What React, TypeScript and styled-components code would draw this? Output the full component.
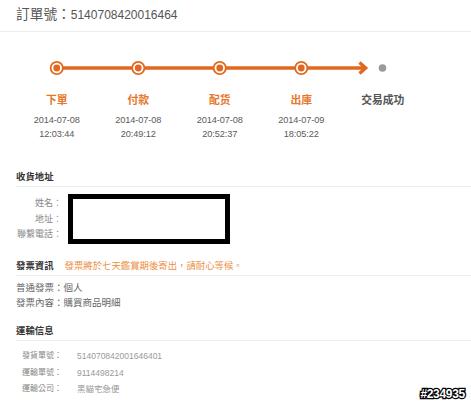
import styled, {createGlobalStyle} from 'styled-components'

const orange = '#e2681f'

const steps = [
  {name: '下單', date: '2014-07-08', time: '12:03:44'},
  {name: '付款', date: '2014-07-08', time: '20:49:12'},
  {name: '配货', date: '2014-07-08', time: '20:52:37'},
  {name: '出庫', date: '2014-07-09', time: '18:05:22'},
  {name: '交易成功'},
]

const shipping = [
  ['發貨單號：', '514070842001646401'],
  ['運輸單號：', '9114498214'],
  ['運輸公司：', '黑貓宅急便'],
]

const GlobalStyle = createGlobalStyle`
  html, body {
    margin: 0;
    background: #fff;
  }
  body {
    font-family: "Liberation Sans", "Noto Sans CJK TC", sans-serif;
    color: #555;
  }
`

// progress bar drawing, coordinates follow the 81.5px step columns
const Track = () => {
  const centers = [40.75, 122.25, 203.75, 285.25]
  return <TrackSvg width="408" height="16" viewBox="0 0 408 16">
    <line x1="40.75" y1="8" x2="349" y2="8" stroke={orange} strokeWidth="3.7"/>
    <polyline points="343.5,2.6 349.6,8 343.5,13.4" fill="none" stroke={orange} strokeWidth="3.4"/>
    {centers.map(cx => <g key={cx}>
      <circle cx={cx} cy="8" r="7" fill={orange}/>
      <circle cx={cx} cy="8" r="5.2" fill="#fff"/>
      <circle cx={cx} cy="8" r="3.4" fill={orange}/>
    </g>)}
    <circle cx="366.5" cy="8" r="3.8" fill="#9a9a9a"/>
  </TrackSvg>
}

const App = () => {
  return <Page>
    <GlobalStyle/>

    <Header>訂單號：<OrderNo>5140708420016464</OrderNo></Header>

    <Progress>
      <Track/>
      <Steps>
        {steps.map(step => <Step key={step.name}>
          <StepName $done={!!step.date}>{step.name}</StepName>
          {step.date && <StepTime>{step.date}<br/>{step.time}</StepTime>}
        </Step>)}
      </Steps>
    </Progress>

    <Section>
      <SectionTitle>收貨地址</SectionTitle>
      <Address>
        <AddressLabels>
          <span>姓名：</span>
          <span>地址：</span>
          <span>聯繫電話：</span>
        </AddressLabels>
        <Redacted/>
      </Address>
    </Section>

    <Section $gap={15}>
      <SectionTitle>發票資訊<Note>發票將於七天鑑賞期後寄出，請耐心等候。</Note></SectionTitle>
      <Invoice>
        <div>普通發票：個人</div>
        <div>發票內容：購買商品明細</div>
      </Invoice>
    </Section>

    <Section $gap={14}>
      <SectionTitle>運輸信息</SectionTitle>
      <Shipping>
        {shipping.map(([label, value]) => <ShipRow key={label}>
          <span>{label}</span>
          <ShipValue>{value}</ShipValue>
        </ShipRow>)}
      </Shipping>
    </Section>

    <Watermark>#234935</Watermark>
  </Page>
}

export default App

const Page = styled.div`
  position: relative;
  width: 471px;
  height: 403px;
  overflow: hidden;
  background: #fff;
`

const Header = styled.header`
  height: 31px;
  line-height: 30px;
  padding-left: 16px;
  border-bottom: 1px solid #ececec;
  font-size: 13.7px;
  color: #555;
`

const OrderNo = styled.span`
  font-size: 12px;
`

const Progress = styled.div`
  padding: 28px 0 0 16px;
`

const TrackSvg = styled.svg`
  display: block;
`

const Steps = styled.div`
  display: grid;
  grid-template-columns: repeat(5, 81.5px);
  margin-top: 17px;
`

const Step = styled.div`
  display: flex;
  flex-direction: column;
  align-items: center;
`

const StepName = styled.div<{ $done: boolean }>`
  font-size: 10.8px;
  line-height: 14px;
  font-weight: bold;
  color: ${p => p.$done ? '#e5762a' : '#555'};
`

const StepTime = styled.div`
  margin-top: 6px;
  font-size: 9.2px;
  line-height: 14px;
  text-align: center;
  letter-spacing: -0.1px;
  color: #5a5a5a;
`

const Section = styled.section<{ $gap?: number }>`
  margin-top: ${p => p.$gap ?? 29}px;
  padding-left: 16px;
`

const SectionTitle = styled.h3`
  margin: 0;
  padding-bottom: 2px;
  border-bottom: 1px solid #ededed;
  font-size: 9.4px;
  line-height: 14px;
  font-weight: bold;
  color: #333;
`

const Note = styled.span`
  margin-left: 11px;
  font-weight: normal;
  color: #eb8f3f;
`

const Address = styled.div`
  display: flex;
  gap: 6px;
  margin-top: 7px;
`

const AddressLabels = styled.div`
  width: 46px;
  padding-top: 2px;
  display: flex;
  flex-direction: column;
  align-items: flex-end;
  font-size: 9px;
  line-height: 15.5px;
  color: #888;
`

const Redacted = styled.div`
  width: 152px;
  height: 40px;
  border: 5px solid #000;
  background: #fff;
`

const Invoice = styled.div`
  margin-top: 5px;
  font-size: 9.5px;
  line-height: 14.5px;
  color: #666;
`

const Shipping = styled.div`
  margin-top: 7px;
  padding-left: 6px;
`

const ShipRow = styled.div`
  display: grid;
  grid-template-columns: 55px auto;
  font-size: 8px;
  line-height: 16.5px;
  color: #888;
`

const ShipValue = styled.span`
  font-size: 8.5px;
  color: #999;
`

const Watermark = styled.div`
  position: absolute;
  right: 6px;
  bottom: 3px;
  font-size: 12px;
  font-weight: bold;
  line-height: 12px;
  color: #fff;
  -webkit-text-stroke: 2.5px #000;
  paint-order: stroke fill;
  letter-spacing: -0.3px;
`
